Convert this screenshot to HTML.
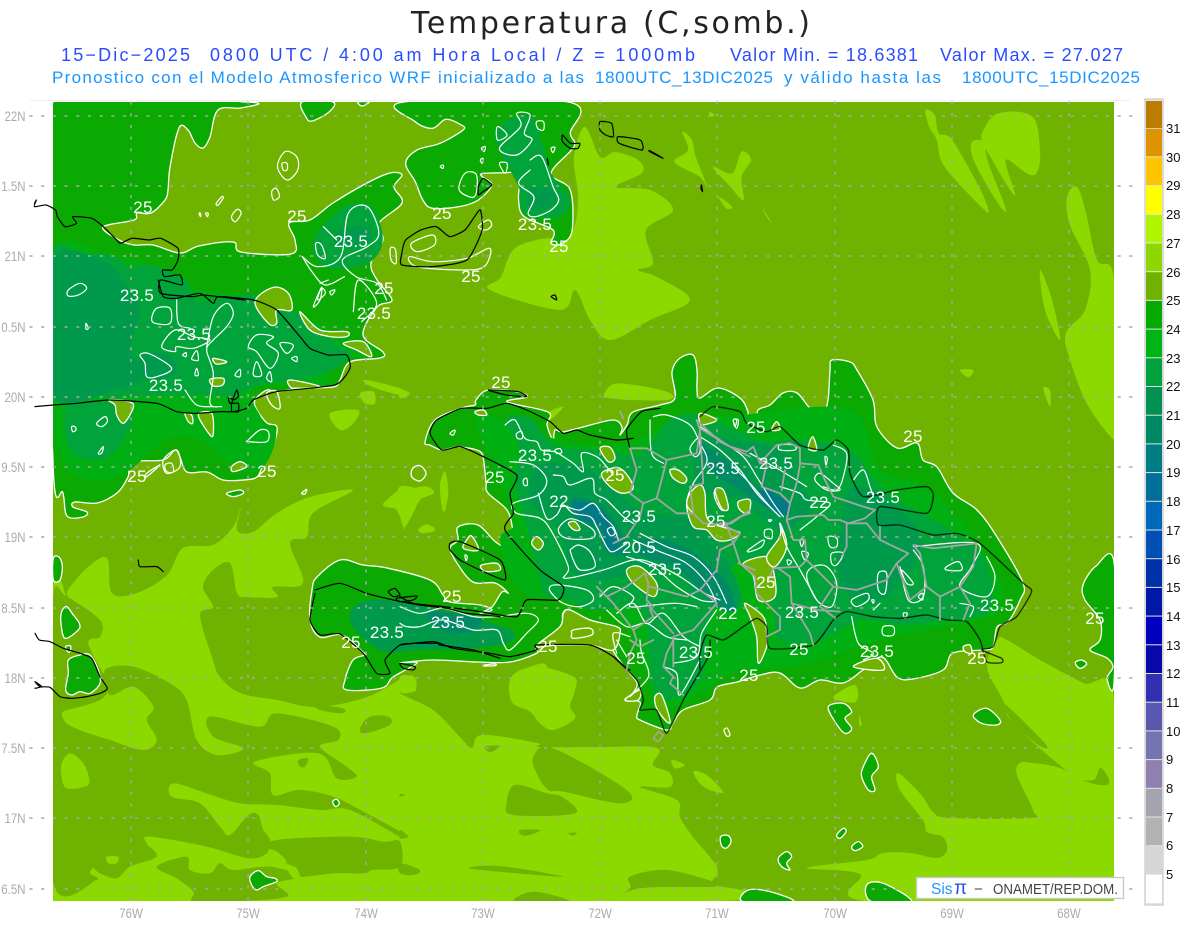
<!DOCTYPE html>
<html><head><meta charset="utf-8"><title>Temperatura</title>
<style>
html,body{margin:0;padding:0;background:#fff}
svg{display:block}
polygon,polyline,path,ellipse{vector-effect:non-scaling-stroke;stroke-linejoin:round;stroke-linecap:round}
.l{fill:#8cd900}.o{fill:#70b200}.g{fill:#0aaa02}.b{fill:#00b012}.c{fill:#00a43a}.d{fill:#009a4c}.e{fill:#008a66}.t{fill:#007a84}
.s{stroke:#fff;stroke-width:1.3}
.w polygon,.w polyline,.w ellipse,.w path{fill:none;stroke:#fff;stroke-width:1.2}
.k polygon,.k polyline,.k path{fill:none;stroke:#000;stroke-width:1.2}
.q polyline{fill:none;stroke:#a5a5a5;stroke-width:1.8}
text{font-family:"Liberation Sans",sans-serif}
.lb text{fill:#fff;font-size:17px;text-anchor:middle;letter-spacing:.3px}
.ax text{fill:#ababab;font-size:13.5px}
.cb text{fill:#111;font-size:13px}
</style></head><body>
<svg width="1200" height="927" viewBox="0 0 1200 927" xmlns="http://www.w3.org/2000/svg">
<defs><clipPath id="m"><rect x="53" y="102" width="1061" height="799"/></clipPath></defs>
<rect width="1200" height="927" fill="#fff"/>
<rect x="30" y="100" width="1100" height="1" fill="#f0f0f0"/>

<text x="411" y="33" font-size="30" textLength="399" fill="#222" style="font-family:'DejaVu Sans',sans-serif">Temperatura (C,somb.)</text>
<g font-size="18" fill="#2a4cff">
<text x="61" y="61" textLength="129">15−Dic−2025</text>
<text x="210" y="61" textLength="485">0800 UTC / 4:00 am Hora Local / Z = 1000mb</text>
<text x="730" y="61" textLength="188">Valor Min. = 18.6381</text>
<text x="940" y="61" textLength="183">Valor Max. = 27.027</text>
</g>
<g font-size="17" fill="#1a96ff">
<text x="52" y="83" textLength="532">Pronostico con el Modelo Atmosferico WRF inicializado a las</text>
<text x="595" y="83" textLength="178">1800UTC_13DIC2025</text>
<text x="784" y="83" textLength="157">y válido hasta las</text>
<text x="962" y="83" textLength="178">1800UTC_15DIC2025</text>
</g>

<g clip-path="url(#m)">
<rect x="53" y="102" width="1061" height="799" class="o"/>
<!-- big lime south -->
<polygon class="l" points="53,901 53,595 67,597 68,590 87,568 107,558 112,593 137,593 167,575 183,548 213,545 233,527 241,507 237,530 253,532 277,513 310,497 353,490 313,513 307,537 290,543 303,583 273,587 277,597 247,597 237,593 230,563 213,570 203,587 213,607 200,615 213,660 220,677 240,693 277,700 317,707 367,697 405,677 415,678 415,690 400,693 433,710 460,737 472,748 482,735 537,743 540,747 600,747 657,748 653,765 670,773 670,787 640,787 677,800 680,817 693,837 717,867 712,882 717,885 717,901"/>
<polygon class="l" points="1114,901 1114,697 1083,683 1040,660 1007,640 997,640 987,667 1003,700 1013,723 1070,773 1093,780 1100,768 1108,777 1107,785 1087,782 1060,768 1033,763 1020,763 1017,775 1033,810 1030,818 950,818 933,812 923,797 910,783 897,773 900,790 923,820 927,832 943,837 947,850 937,858 910,853 883,853 867,860 807,868 860,874 866,901"/>
<!-- olive on lime -->
<g transform="translate(0,480) scale(.3333)"><polygon class="o" points="160,345 200,350 300,420 300,470 265,490 320,600 330,620 300,660 200,690 160,690"/></g>
<g transform="translate(0,640) scale(.3333)" class="o">
<polygon points="160,170 200,250 330,300 430,330 470,300 440,240 460,200 400,140 330,165 315,90 400,80 510,130 560,180 590,300 650,345 730,325 640,290 630,230 780,260 830,220 1000,260 1015,300 960,320 1040,380 1070,410 1010,415 955,340 765,365 810,400 820,465 900,450 1000,470 1100,520 1200,575 1200,590 1050,510 960,510 830,495 720,490 620,460 520,430 515,470 600,490 660,560 690,585 745,525 775,525 790,570 810,600 800,640 745,655 620,620 450,590 440,610 470,650 390,680 350,715 300,700 280,685 270,700 290,720 160,730"/>
<polygon points="830,600 1050,590 1150,605 1200,605 1200,680 1120,690 1090,700 1000,700 900,710 880,680 860,670 810,630"/>
<polygon points="470,680 560,650 570,690 630,700 660,670 700,690 810,680 900,710 830,730 860,770 700,785 580,785 580,755 530,715"/>
<polygon points="950,195 1030,205 1025,220 960,210"/>
<polygon points="1080,265 1110,230 1165,230 1170,255 1095,280"/>
<polygon points="895,360 925,355 915,380 900,380"/>
</g>
<g transform="translate(400,640) scale(.3333)" class="o">
<polygon points="320,490 345,435 440,460 485,470 525,520 340,525"/>
<polygon points="400,350 460,325 680,450 660,490 490,455 445,450 410,400"/>
<polygon points="205,685 300,678 490,710 350,700"/>
<polygon points="0,670 60,690 40,705 0,700"/>
<polygon points="690,710 800,690 940,725 950,740 720,745 630,785 690,745"/>
<polygon points="360,570 420,570 390,585 365,585"/>
<polygon points="345,785 400,755 510,785"/>
<polygon points="255,320 300,318 270,337"/>
<polygon points="0,570 25,590 0,595"/>
<polygon points="120,210 170,235 160,240"/>
<polygon points="505,580 530,578 520,587"/>
<polygon points="0,462 16,465 0,470"/>
</g>
<g transform="translate(800,640) scale(.3333)"><polygon class="o" points="612,190 735,310 720,318 640,250"/></g>
<!-- lime small in south-olive -->
<g transform="translate(0,640) scale(.3333)" class="l">
<polygon points="185,370 210,340 250,370 268,420 255,440 200,445 185,410"/>
<polygon points="320,650 355,650 350,670 325,670"/>
<polygon points="805,630 830,635 860,665 820,660"/>
<polygon points="865,690 885,680 900,710 880,715"/>
</g>
<g transform="translate(400,640) scale(.3333)" class="l">
<polygon points="335,110 410,80 520,110 525,150 510,200 525,235 460,270 420,250 390,215 335,185"/>
<polygon points="815,360 855,375 825,385"/>
<polygon points="880,395 920,405 970,458 910,440"/>
<polygon points="0,110 30,110 48,150 10,160 0,150"/>
</g>
<g transform="translate(800,640) scale(.3333)" class="l">
<polygon points="105,165 165,135 168,185 110,180"/>
<polygon points="178,225 185,255 178,255"/>
</g>
<!-- lime mid/north -->
<g transform="translate(0,280) scale(.3333)" class="l">
<polygon points="990,400 1075,390 1060,430 1020,450"/>
<polygon points="1095,300 1200,325 1200,345 1115,320"/>
<polygon points="1080,340 1120,335 1125,370 1095,370"/>
<polygon points="1200,630 1150,675 1200,680"/>
</g>
<g transform="translate(0,480) scale(.3333)" class="l">
<polygon points="1150,70 1260,20 1300,40 1210,80 1215,150 1190,90"/>
<polygon points="1320,10 1340,5 1335,95"/>
<polygon points="1255,150 1280,133 1305,150 1280,158"/>
</g>
<g transform="translate(400,370) scale(.3333)" class="l">
<polygon points="0,350 90,370 60,390 15,470 0,420"/>
<polygon points="120,350 135,305 145,370 130,425"/>
<polygon points="55,480 75,465 105,475 70,490"/>
<polygon points="0,60 30,70 0,85"/>
<polygon points="620,60 660,40 800,65 800,90 630,85"/>
<polygon points="440,130 490,110 450,150"/>
<polygon points="385,895 430,880 440,900"/>
</g>
<g transform="translate(700,370) scale(.3333)" class="l">
<polygon points="780,0 820,0 805,22"/>
<polygon points="1030,55 1050,60 1050,110"/>
</g>
<polygon class="l" points="585,127 574,157 578,200 570,233 536,240 513,250 501,277 490,290 560,310 575,290 590,320 610,340 650,320 690,300 657,277 638,270 653,263 646,230 673,210 650,190 615,187 642,173 638,160 615,152 600,157"/>
<g transform="translate(600,0) scale(.3827,.3333)" class="l">
<polygon points="215,395 240,420 250,470 280,560 260,530 210,500 195,480 230,450"/>
<polygon points="295,500 345,520 370,455 395,480 370,530 375,600 340,560"/>
<polygon points="310,590 345,620 330,625"/>
<polygon points="425,625 450,670 435,650"/>
<polygon points="285,335 300,345 290,350"/>
<polygon points="850,330 875,345 885,400 920,420 990,560 1015,630 1000,625 900,500 880,420 860,380"/>
<polygon points="970,430 1000,425 1015,490 1060,625 1040,610 980,490"/>
<polygon points="1000,395 1040,340 1130,350 1150,460 1140,520 1115,520 1060,480 1085,585 1055,540 1020,470 1000,430"/>
</g>
<polygon class="l" points="1067,197 1077,187 1086,213 1097,260 1114,280 1114,425 1090,400 1065,340 1085,310 1090,270 1070,225"/>
<polygon class="l" points="1040,270 1052,300 1060,340 1045,310"/>
<polygon class="l" points="1065,340 1085,370 1114,425 1114,440 1085,400"/>

<!-- land: west -->
<polygon class="g s" points="53,102 245,102 241,108 218,110 210,137 203,148 195,143 188,130 179,128 170,167 168,190 165,200 151,213 137,213 134,220 103,227 119,240 134,245 153,245 180,253 199,246 233,242 241,252 291,254 295,240 289,223 310,220 333,203 367,183 390,173 402,175 394,187 402,203 379,223 383,240 371,263 377,280 392,300 377,307 363,335 383,352 380,358 350,362 340,380 333,387 300,388 277,392 267,390 255,400 257,410 267,423 277,427 273,447 263,465 257,477 243,480 223,480 207,472 187,472 180,457 175,450 163,460 132,462 128,477 117,493 97,503 75,502 73,507 87,512 83,517 67,516 63,493 53,460"/>
<polygon class="g s" points="302,102 306,117 312,121 329,112 333,102"/>
<polygon class="g s" points="358,102 362,106 369,102"/>
<g transform="scale(.3827,.3333)">
<polygon class="g s" points="1055,306 1085,365 1130,385 1165,358 1205,375 1210,390 1150,430 1090,450 1060,490 1085,545 1105,600 1130,625 1200,620 1250,600 1285,555 1260,530 1265,520 1350,515 1375,490 1360,545 1355,600 1370,650 1445,690 1440,730 1470,730 1495,690 1490,570 1440,520 1500,440 1490,400 1485,306"/>
</g>
<!-- west shades -->
<polygon class="b" points="53,253 110,255 150,265 200,290 265,300 340,335 375,350 330,365 325,385 265,385 250,395 262,420 265,445 240,470 200,440 165,440 130,470 100,480 70,470 53,420"/>
<polygon class="c" points="53,254 80,255 110,255 130,268 150,265 185,280 200,300 260,295 300,315 330,340 350,355 320,375 260,385 230,395 180,395 100,398 53,395"/>
<polygon class="d" points="53,260 105,262 125,285 140,310 130,350 145,375 110,392 53,392"/>
<polygon class="d" points="140,355 170,355 175,375 145,378"/>
<polygon class="c" points="70,405 130,410 120,445 100,460 70,450"/>
<polygon class="b" points="240,430 275,430 265,465 240,470"/>
<g transform="scale(.3827,.3333)">
<polygon class="c" points="1300,380 1385,345 1420,440 1440,520 1490,600 1460,650 1370,640 1355,560 1300,440"/>
<polygon class="d" points="1385,570 1440,570 1450,610 1390,630"/>
<polygon class="c" points="820,720 900,620 970,620 1000,720 960,790 850,800"/>
<polygon class="d" points="890,690 960,680 960,730 880,740"/>
</g>
<!-- island -->
<polygon class="g s" points="425,442 435,420 462,408 475,405 476,400 488,390 518,392 527,397 507,402 548,412 547,425 553,440 555,430 563,432 583,427 613,420 622,427 620,435 627,425 633,412 660,405 675,398 672,372 680,358 693,355 697,370 697,390 700,398 718,388 740,398 748,412 747,420 757,422 758,410 770,405 783,393 797,393 810,408 823,413 828,400 830,370 832,360 850,362 857,370 873,400 877,427 897,448 917,443 923,460 937,467 953,493 977,510 997,537 1023,583 1020,600 1008,622 997,627 993,647 983,650 953,653 943,670 913,679 897,677 882,657 863,670 843,683 820,680 800,688 780,673 760,675 737,682 717,687 710,700 683,710 673,723 667,730 640,720 637,715 640,702 625,700 633,693 637,683 627,670 613,650 617,640 620,633 617,627 590,620 570,610 563,613 560,627 537,647 537,653 510,662 477,662 433,660 400,663 417,663 393,677 382,688 347,690 345,680 353,660 365,655 363,652 342,635 320,637 310,620 312,590 317,577 340,560 363,565 387,568 430,580 443,595 450,602 480,605 492,610 480,613 492,607 502,592 508,593 495,583 473,582 457,563 450,548 458,540 458,527 478,525 497,543 518,552 513,530 507,510 488,493 486,482 483,457 477,450 457,447 442,450 430,445"/>
<!-- shades island -->
<polygon class="b" points="480,415 560,440 620,445 680,420 740,415 850,410 880,470 930,490 990,560 1000,610 950,625 880,640 800,665 740,670 705,690 660,710 645,670 620,620 560,600 520,590 500,540 515,520 490,460"/>
<polygon class="c" points="505,420 530,418 555,445 600,450 635,455 650,445 670,420 700,415 760,440 800,440 850,450 875,480 900,500 950,530 985,560 990,610 950,620 900,625 860,620 820,640 780,640 770,600 740,560 710,620 700,680 660,700 650,660 640,610 590,610 570,600 545,595 540,580 525,520 515,480 520,450"/>
<polygon class="d" points="540,465 590,470 640,510 700,520 720,550 740,590 735,610 700,600 670,570 600,580 570,570 560,530 530,500"/>
<polygon class="d" points="700,440 780,450 800,480 810,510 780,530 740,500 700,490"/>
<polygon class="d" points="850,490 900,510 920,550 880,600 840,580"/>
<polygon class="d" points="350,620 370,600 440,610 510,630 500,645 420,650 380,650"/>
<polygon class="e" points="573,498 600,505 620,530 628,555 607,552 597,530 575,520"/>
<polygon class="e" points="640,540 680,545 725,580 735,610 715,605 680,570 640,555"/>
<polygon class="e" points="700,443 733,465 760,490 785,500 790,515 770,510 740,490 710,470"/>
<polygon class="e" points="430,612 480,618 470,632 440,630"/>
<polygon class="t" points="573,502 597,507 613,527 617,550 607,547 600,527 580,517"/>
<polygon class="t" points="763,487 780,497 790,503 787,513 780,515 763,502"/>
<!-- south-east & other blobs -->
<polygon class="g s" points="1114,562 1096,566 1083,585 1085,600 1100,620 1100,640 1090,650 1107,658 1113,667 1107,678 1114,683"/>
<g transform="translate(0,640) scale(.3333)">
<polygon class="g s" points="205,60 240,45 270,45 295,90 300,130 270,160 240,155 215,165 197,150 205,100"/>
<polygon class="g s" points="197,20 212,18 210,35 203,35"/>
<polygon class="g s" points="750,710 775,692 800,710 825,715 830,725 790,740 770,750 755,735"/>
<polygon class="g s" points="998,485 1010,478 1018,490 1007,500"/>
</g>
<g transform="translate(0,480) scale(.3333)">
<polygon class="g s" points="185,395 200,380 220,405 238,430 235,450 195,475 183,430"/>
<polygon class="g s" points="160,235 178,232 187,260 180,300 160,300"/>
</g>
<g transform="translate(800,640) scale(.3333)">
<polygon class="g s" points="85,200 130,190 155,215 135,235 155,265 135,280 105,245"/>
<polygon class="g s" points="190,380 215,340 235,380 215,410 225,450 205,450 185,410"/>
<polygon class="g s" points="520,225 560,205 600,240 590,255 545,250"/>
<polygon class="g s" points="110,585 130,565 138,575 120,595"/>
<polygon class="g s" points="155,620 175,605 188,620 165,632"/>
<polygon class="g s" points="200,735 250,730 335,785 215,785"/>
<polygon class="g s" points="826,68 845,60 860,72 840,85"/>
</g>
<g transform="translate(400,640) scale(.3333)">
<polygon class="g s" points="1135,655 1160,635 1175,650 1160,670 1170,690 1145,680"/>
<polygon class="g s" points="1030,785 1045,750 1110,755 1180,785"/>
<polygon class="g s" points="962,590 985,587 993,605 980,624 965,618"/>
</g>
<!-- olive holes with white outline -->
<g transform="translate(0,280) scale(.3333)">
<polygon class="o s" points="325,360 360,360 398,370 395,395 370,430 350,405 345,375"/>
<polygon class="o s" points="555,400 575,405 578,430 565,425"/>
<polygon class="o s" points="595,405 635,400 640,460 630,465"/>
<polygon class="o s" points="765,65 820,22 865,40 875,90 830,90 830,130 805,130"/>
<polygon class="o s" points="900,95 960,150 1040,155 1040,170 990,170 930,150"/>
<polygon class="o s" points="1030,190 1090,185 1115,230 1070,210"/>
<polygon class="o s" points="870,300 960,320 890,325 870,320"/>
<polygon class="o s" points="630,298 670,295 668,315 640,318"/>
<polygon class="o s" points="640,235 680,245 660,252 645,250"/>
<polygon class="o s" points="800,340 830,335 840,385 815,375"/>
<polygon class="o s" points="700,575 740,560 720,545 695,560"/>
<polygon class="o s" points="440,590 480,555 440,580"/>
<polygon class="g s" points="680,640 720,630 730,640 700,650"/>
<polygon class="o s" points="905,640 920,628 915,642"/>
</g>
<g transform="translate(400,370) scale(.3333)">
<polygon class="o s" points="480,770 490,730 510,720 570,750 650,770 660,790 640,840 570,825 470,825 410,828"/>
<polygon class="o s" points="225,125 250,120 260,135 235,135"/>
<polygon class="o s" points="600,235 630,232 645,265 625,275"/>
<polygon class="o s" points="810,300 835,300 860,325 850,340 820,325"/>
<polygon class="o s" points="945,360 965,360 985,410 965,420 945,385"/>
<polygon class="o s" points="680,600 720,590 770,640 760,680 700,640"/>
<polygon class="o s" points="870,370 900,345 915,370 925,450 1000,480 1020,490 990,510 950,510 920,480 880,470 860,410"/>
<polygon class="o s" points="505,460 525,455 540,478 522,480"/>
<polygon class="o s" points="200,510 215,498 235,540 190,535"/>
<polygon class="o s" points="245,585 290,580 300,600 260,605 245,597"/>
<polygon class="o s" points="520,780 570,775 575,795 520,805 515,790"/>
<polygon class="o s" points="395,520 410,500 430,520 415,540"/>
<polygon class="o s" points="38,295 60,287 78,310 60,333 35,320"/>
<polygon class="o s" points="605,310 660,295 700,350 670,370 630,350"/>
</g>
<g transform="translate(700,370) scale(.3333)">
<polygon class="o s" points="130,580 200,560 220,600 225,680 175,690 160,620"/>
<polygon class="o s" points="135,700 190,740 200,790 200,830 175,880 170,800 150,740"/>
<polygon class="o s" points="0,130 50,150 10,165 0,160"/>
<polygon class="o s" points="325,235 338,200 350,240"/>
<polygon class="o s" points="215,180 230,155 240,178"/>
<polygon class="o s" points="240,460 260,530 225,590 200,560 240,500"/>
<polygon class="o s" points="460,890 530,865 550,900"/>
<polygon class="o s" points="45,360 70,360 85,415 65,415"/>
<polygon class="o s" points="115,395 150,390 145,430 120,420"/>
<polygon class="o s" points="790,830 810,825 815,850 795,845"/>
</g>
<g transform="translate(400,640) scale(.3333)">
<polygon class="o s" points="765,170 785,165 810,240 800,245 770,205"/>
<polygon class="o s" points="675,180 720,150 715,180"/>
</g>
<!-- white contours -->
<g class="w">
<g transform="scale(.3827,.3333)">
<polygon points="725,500 745,455 775,470 778,510 750,540"/>
<polygon points="737,490 750,490 750,510 740,510"/>
<polygon points="710,575 722,565 730,590 715,600"/>
<polygon points="565,610 580,590 583,595 570,615"/>
<polygon points="605,650 620,628 630,640 615,665"/>
<polygon points="520,640 524,640 524,650"/>
<polygon points="537,640 544,640 542,650"/>
<polygon points="1250,680 1275,660 1285,675 1270,690"/>
<polygon points="1300,380 1325,405 1300,420"/>
<polygon points="1350,340 1385,345 1370,400 1390,420 1350,465 1305,445 1360,380"/>
<polygon points="1402,365 1420,365 1420,390 1405,385"/>
<polygon points="1440,445 1450,442 1445,458"/>
<polyline points="1385,480 1415,470 1445,560 1460,600 1440,630 1400,650 1380,640 1395,590 1355,550 1385,510"/>
<polygon points="1215,520 1245,525 1240,590 1200,570"/>
<polygon points="1305,490 1325,490 1320,520"/>
<polygon points="1020,745 1033,748 1035,790 1022,780"/>
<polygon points="1075,730 1130,705 1135,735 1090,755"/>
<polygon points="1070,770 1130,785 1220,775 1280,745 1265,800 1205,810 1090,800"/>
<polyline points="790,770 830,800 890,770 910,640 960,620 990,700 960,740 895,780 930,830 985,850 1010,900"/>
<polygon points="825,730 840,735 850,775 830,765"/>
<polyline points="845,680 880,720"/>
<polyline points="790,770 815,815 850,855 900,830"/>
<polygon points="830,900 840,865 850,880"/>
<polygon points="1258,445 1268,440 1265,455"/>
<polygon points="1255,480 1262,475 1260,490"/>
<polygon points="1150,500 1158,495 1158,505"/>
</g>
<g transform="translate(0,280) scale(.3333)">
<polygon points="205,30 240,10 260,25 235,45 205,48"/>
<polygon points="455,115 470,85 510,85 510,130 465,130"/>
<polygon points="215,440 225,440 228,450 218,455"/>
<polygon points="290,430 315,410 322,425 305,440"/>
<polygon points="295,520 310,500 305,520"/>
<polygon points="420,225 450,222 515,265 470,290 440,290 435,250"/>
<polygon points="485,200 525,150 580,170 630,180 580,205 530,200 525,215"/>
<polyline points="620,200 640,110 680,70 700,100 680,140 640,180 620,210 640,280 630,370 665,380"/>
<polygon points="745,200 770,165 820,170 800,190 835,220 810,265 770,215"/>
<polygon points="760,285 770,245 785,285"/>
<polygon points="705,285 720,268 720,290"/>
<polygon points="800,295 810,275 815,305"/>
<polygon points="745,480 780,450 805,455 800,485 745,485"/>
<polygon points="575,235 590,212 595,240 580,240"/>
<polygon points="585,285 590,265 595,285"/>
<polygon points="548,225 558,218 558,230"/>
<polygon points="258,130 265,145 258,147"/>
<polyline points="555,330 590,375 640,380"/>
<polyline points="530,60 535,130 570,145"/>
<polygon points="490,540 530,510 540,560 500,580"/>
<polygon points="495,555 515,550 520,575 500,575"/>
<polygon points="840,190 870,190 880,200 860,220"/>
<polygon points="875,235 890,230 890,245"/>
<polygon points="940,80 965,22 960,60"/>
<polygon points="990,35 1005,30 995,45"/>
<polyline points="1060,95 1075,0 1130,70 1085,125"/>
<polyline points="960,10 985,0"/>
</g>
<g transform="translate(400,370) scale(.3333)">
<polyline points="315,165 345,150 375,205 410,215 425,240 465,245 490,260 520,280 550,305 545,250 590,260 620,290 640,315"/>
<polyline points="330,275 400,285 440,330 415,375 340,400 350,430 420,445 455,485 505,590 495,625 610,600 700,570 760,580 840,620 905,665 960,690"/>
<polyline points="460,315 490,320 510,345 575,325 585,370 620,390 670,440 700,460"/>
<polyline points="415,370 440,445 470,435 490,405 520,430 570,440 590,470 620,530 640,545 680,520"/>
<polyline points="500,410 540,420 580,400 610,440 640,470 655,510"/>
<polygon points="622,480 635,472 645,490 632,497"/>
<polygon points="475,480 500,450 530,450 580,480 575,505 500,505"/>
<polyline points="510,540 535,525 570,545 585,590 540,600 520,570 510,540"/>
<polyline points="720,490 800,530 880,560 940,620 980,700"/>
<polyline points="700,510 780,545 860,580 920,640 950,700"/>
<polyline points="680,560 760,590 830,650 900,690 940,695"/>
<polyline points="600,680 640,650 700,680 690,710 760,705 830,700 890,710"/>
<polyline points="620,720 680,770 740,760 800,800 860,810"/>
<polyline points="760,140 800,135 870,165 900,220 920,260 915,290 880,340 860,400 880,430"/>
<polyline points="750,150 755,250 790,280"/>
<polyline points="0,710 60,730 130,715 220,740 290,740 380,730 415,750 380,790 330,840 310,820 290,780 220,780 130,750 60,770 20,770 0,760"/>
<polygon points="450,650 480,645 560,660 580,690 540,710 490,700 455,670"/>
<polygon points="870,235 895,205 900,245 885,260"/>
<polygon points="1000,150 1015,150 1010,175"/>
<polygon points="350,190 365,185 367,205 352,205"/>
<polygon points="370,330 380,325 382,345 372,345"/>
<polygon points="195,555 202,560 198,572"/>
<polygon points="150,190 165,180 160,195"/>
<polygon points="465,240 480,236 485,248 470,250"/>
<polyline points="650,730 700,700 740,760 790,730 850,800 900,830"/>
<polyline points="820,880 890,860 905,790 950,720"/>
<polygon points="255,885 285,882 285,887 250,888"/>
<polyline points="690,800 640,790 650,850"/>
</g>
<g transform="translate(700,370) scale(.3333)">
<polyline points="0,170 60,210 130,260 170,320 220,400 250,440"/>
<polyline points="0,200 60,240 120,300 170,370 230,430"/>
<polyline points="100,290 150,340 210,410 240,440"/>
<polyline points="240,350 300,370 320,390 390,400 350,440 300,480"/>
<polyline points="150,250 240,300 320,350"/>
<polygon points="240,225 280,225 285,240 240,240"/>
<polygon points="345,330 360,310 400,340 420,360 380,360"/>
<polygon points="385,500 410,505 410,530 390,530"/>
<polygon points="395,550 430,550 410,585 395,580"/>
<polygon points="145,540 190,510 185,530 150,545"/>
<polygon points="740,590 775,575 785,600 740,600"/>
<polygon points="535,610 560,610 555,670 535,660"/>
<polygon points="605,600 640,640 620,640"/>
<polygon points="455,690 500,670 505,690 470,710"/>
<polygon points="550,770 580,770 580,795 550,795"/>
<polyline points="640,530 830,520 815,590 780,650 860,680 885,620 860,560"/>
<polyline points="640,540 670,590 670,680 625,690 600,590"/>
<polyline points="455,740 475,820 520,850 490,870"/>
<polygon points="340,590 380,590 410,640 395,710 350,690 320,620"/>
<polyline points="240,460 260,530 300,600 350,690"/>
<polyline points="400,225 440,250 430,320 410,360 370,350"/>
<polyline points="460,330 490,300 510,350 520,380"/>
<polygon points="100,150 110,150 105,170"/>
<polygon points="375,260 382,265 378,285"/>
<polygon points="195,480 215,480 215,505 195,500"/>
<polygon points="300,510 312,510 305,530"/>
<polygon points="305,545 325,550 315,570"/>
<polygon points="262,570 275,575 265,585"/>
<polygon points="655,680 668,670 668,690"/>
<polygon points="515,690 522,690 520,700"/>
<polyline points="780,700 820,710 810,740"/>
<polyline points="540,700 520,720"/>
<polygon points="610,730 622,730 615,745"/>
<polygon points="205,450 215,450 210,455"/>
</g>
<g transform="translate(400,640) scale(.3333)">
<polyline points="720,0 725,40 745,90 740,120 690,170"/>
<polyline points="790,80 830,100 840,165 900,60"/>
<polygon points="972,270 982,265 990,285 980,288"/>
<polyline points="650,0 680,50"/>
</g>
</g>
</g>

<!-- coasts -->
<g class="k">
<polyline transform="scale(.3827,.3333)" points="90,610 95,600 90,620 120,615 145,630 150,650 170,680 200,670 190,650 240,655 270,680 305,720 315,730 345,715 390,720 420,715 465,745 465,780 450,810 425,810 430,830 470,825 475,855 420,840 420,880 500,890 530,885 570,890 640,900"/>
<g transform="scale(.3827,.3333)">
<polygon points="1050,760 1060,720 1100,690 1140,680 1175,710 1215,690 1240,650 1255,630 1260,690 1220,780 1130,800 1050,795"/>
<polygon points="1262,535 1285,555 1262,575 1250,585 1250,560"/>
<polygon points="1470,405 1490,430 1515,430 1510,445 1490,445 1470,425"/>
<polyline points="1430,475 1433,495"/>
<polygon points="1440,890 1450,885 1455,900"/>
</g>
<g transform="translate(600,0) scale(.3827,.3333)">
<polygon points="0,365 30,370 35,410 15,405 0,390"/>
<polygon points="48,410 105,420 110,450 50,430"/>
<polygon points="130,452 165,475 130,455"/>
<polygon points="265,555 268,575 264,565"/>
</g>
<polyline transform="translate(0,280) scale(.3333)" points="475,0 490,50 530,55 600,40 640,70 655,50 760,60 830,90 900,170 930,205 985,225 1040,225 1050,265 1005,315 830,335 760,360 740,385 700,395 660,395 590,400 530,395 470,370 330,360 230,370 160,375 105,380"/>
<polyline transform="translate(0,280) scale(.3333)" points="695,395 695,370 710,330 715,350 700,360 685,350 690,370 715,370 715,395 700,395"/>
<polyline transform="translate(0,280) scale(.3333)" points="415,840 420,860 470,860 490,875"/>
<g transform="translate(0,480) scale(.3333)">
<polyline points="105,460 118,480 150,485 190,505 240,520 275,535 300,590 322,625 300,640 260,650 215,655 180,650 150,622 120,620 105,605 125,620 105,625"/>
<polyline points="945,330 1020,310 1100,340 1180,360 1260,375 1340,385 1400,400 1500,410"/>
<polyline points="945,340 930,420 960,465 1020,462 1090,520 1130,580 1170,580 1155,540 1200,495 1250,490 1320,490 1320,495 1420,510 1500,535"/>
<polygon points="1165,335 1185,325 1200,345 1180,350"/>
<polygon points="1190,355 1250,348 1240,360 1200,365"/>
<polygon points="1200,550 1245,560 1240,570 1210,565"/>
</g>
<g transform="translate(400,370) scale(.3333)">
<polyline points="700,205 650,210 570,195 530,180 490,190 450,155 380,120 320,100 262,115 185,115 110,150 90,190 125,240 180,230 250,260 350,315 330,370 340,430 315,480 420,600 490,650 475,690 380,690 350,740 240,725 130,710 40,700 0,680"/>
<polyline points="0,825 100,815 160,835 270,850 330,860 410,840 410,825 570,825 640,860 680,895 690,900"/>
<polygon points="150,520 180,515 300,570 315,630 240,600 180,570 150,540"/>
<polygon points="265,60 355,65 380,80 320,75"/>
<polyline points="690,235 680,180 725,125 780,115"/>
</g>
</g>
<g class="k" style="opacity:.85">
<g transform="translate(700,370) scale(.3333)">
<polyline points="0,140 40,110 120,125 140,160 200,185 240,170 300,225 370,240 410,210 445,240 450,310 490,380 590,360 680,350 700,375 680,430 540,410 535,465 600,465 700,495 770,490 840,520 970,640 995,665 950,740 900,770 880,830 845,840 905,865 905,878 860,875 840,810 800,755 740,750 680,735 600,745 520,740 440,725 400,750 340,825 210,835 200,770 170,745 130,770 70,810 20,795 0,850 0,900"/>
</g>
<polyline transform="translate(400,640) scale(.3333)" points="930,0 925,50 850,180 800,280 770,210 720,210 730,180 710,120 640,50"/>
</g>
<!-- province borders -->
<g class="q">
<g transform="translate(400,370) scale(.3333)">
<polyline points="690,235 710,300 690,370 730,400 720,440 680,500 640,520"/>
<polyline points="590,650 620,680 680,650 735,610 745,640 740,690 760,710"/>
<polyline points="595,655 640,700 700,780 710,810 690,850 680,900"/>
<polyline points="690,235 740,235 800,270 790,310 770,385 730,400"/>
<polyline points="770,385 830,430 880,430 910,460 980,465 1020,440 1050,430"/>
<polyline points="880,430 870,350 910,340 900,180 890,150 960,215 1050,260"/>
<polyline points="800,270 890,250 900,180"/>
<polyline points="980,465 1000,520 960,540 950,600 900,660 940,690 950,700 880,780 820,800 820,890"/>
<polyline points="900,660 860,680 750,650"/>
<polyline points="740,700 820,790"/>
<polyline points="750,720 760,740 700,780"/>
<polyline points="660,125 670,145"/>
</g>
<g transform="translate(700,370) scale(.3333)">
<polyline points="0,175 90,230 140,245 160,230 180,280 230,225 270,220 300,235 300,280 355,285 370,320 400,380 490,410 525,420 495,445 445,460 420,450 385,450 370,435 290,440 260,450 270,400 240,370 185,350 200,280 180,280"/>
<polyline points="255,300 245,360"/><polyline points="300,285 290,340 270,400"/>
<polyline points="150,420 95,460 60,460 120,490 100,520 120,580 165,620 170,670 240,740 240,780 200,800"/>
<polyline points="115,580 165,600"/>
<polyline points="260,450 280,510 315,510 320,570 300,590 220,595 205,630"/>
<polyline points="320,570 400,650 470,660 500,650 560,630 590,580 625,550 540,510 500,460 445,460"/>
<polyline points="590,580 630,690 680,650 670,600 660,550 640,525 700,535 830,520 820,590 780,650 720,680 680,650"/>
<polyline points="720,680 720,750"/><polyline points="780,650 810,700 790,750"/>
<polyline points="400,650 360,710 400,740"/>
<polyline points="440,460 440,530 425,560"/><polyline points="540,510 540,470"/>
<polyline points="235,595 270,620 275,700 300,740 330,790 340,825"/>
<polyline points="275,700 350,720 420,725"/>
</g>
<polygon transform="translate(400,640) scale(.3333)" points="760,295 775,275 790,285 775,305" style="fill:none;stroke:#a5a5a5;stroke-width:1.5"/>
<polyline transform="translate(400,640) scale(.3333)" points="690,0 720,20 760,0"/>
<polyline transform="translate(400,640) scale(.3333)" points="820,0 800,40 790,80 820,110 810,130 850,165"/>
</g>

<!-- grid -->
<g stroke="#a8a8a8" stroke-width="1.5" stroke-dasharray="2 9.7" fill="none">
<path d="M30 116H1135M30 186H1135M30 256H1135M30 327H1135M30 397H1135M30 467H1135M30 537H1135M30 608H1135M30 678H1135M30 748H1135M30 818H1135M30 889H1135"/>
<path d="M131 102V905M248 102V905M366 102V905M483 102V905M600 102V905M717 102V905M835 102V905M952 102V905M1069 102V905"/>
</g>
<!-- contour labels -->
<g class="lb">
<text x="143" y="213">25</text><text x="297" y="222">25</text><text x="442" y="219">25</text><text x="535" y="230">23.5</text><text x="559" y="252">25</text><text x="351" y="247">23.5</text><text x="471" y="282">25</text><text x="384" y="294">25</text><text x="137" y="301">23.5</text><text x="374" y="319">23.5</text><text x="194" y="340">23.5</text><text x="166" y="391">23.5</text><text x="501" y="388">25</text><text x="267" y="477">25</text><text x="137" y="482">25</text><text x="913" y="442">25</text><text x="756" y="433">25</text><text x="535" y="461">23.5</text><text x="723" y="474">23.5</text><text x="776" y="469">23.5</text><text x="495" y="483">25</text><text x="615" y="481">25</text><text x="559" y="507">22</text><text x="819" y="508">22</text><text x="883" y="503">23.5</text><text x="639" y="522">23.5</text><text x="716" y="527">25</text><text x="639" y="553">20.5</text><text x="665" y="575">23.5</text><text x="766" y="588">25</text><text x="452" y="602">25</text><text x="997" y="611">23.5</text><text x="802" y="618">23.5</text><text x="728" y="619">22</text><text x="387" y="638">23.5</text><text x="448" y="628">23.5</text><text x="351" y="648">25</text><text x="548" y="652">25</text><text x="1095" y="624">25</text><text x="799" y="655">25</text><text x="877" y="657">23.5</text><text x="696" y="658">23.5</text><text x="636" y="664">25</text><text x="977" y="664">25</text><text x="749" y="681">25</text>
</g>
<!-- axes -->
<g class="ax" text-anchor="end" transform="scale(.85,1)">
<text x="30" y="121">22N</text><text x="30" y="191">1.5N</text><text x="30" y="261">21N</text><text x="30" y="332">0.5N</text><text x="30" y="402">20N</text><text x="30" y="472">9.5N</text><text x="30" y="542">19N</text><text x="30" y="613">8.5N</text><text x="30" y="683">18N</text><text x="30" y="753">7.5N</text><text x="30" y="823">17N</text><text x="30" y="894">6.5N</text>
</g>
<g class="ax" text-anchor="middle" transform="scale(.85,1)">
<text x="154.1" y="918">76W</text><text x="291.8" y="918">75W</text><text x="430.6" y="918">74W</text><text x="568.2" y="918">73W</text><text x="705.9" y="918">72W</text><text x="843.5" y="918">71W</text><text x="982.4" y="918">70W</text><text x="1120" y="918">69W</text><text x="1257.6" y="918">68W</text>
</g>
<!-- watermark -->
<rect x="916.5" y="877.5" width="207" height="21" fill="#fff" stroke="#c8c8c8" stroke-width="1.4"/>
<text x="931" y="894" font-size="15.5" fill="#1e96ff">Sis</text>
<text x="954" y="894" font-size="19" fill="#2a4cff" font-family="'DejaVu Sans',sans-serif">π</text>
<text x="974" y="894" font-size="15" fill="#444">−</text>
<text x="993" y="894" font-size="14.5" fill="#444" textLength="125" lengthAdjust="spacingAndGlyphs">ONAMET/REP.DOM.</text>

<!-- colorbar -->
<rect x="1145" y="99" width="18" height="806" fill="#e4e4e4" stroke="#cfcfcf" stroke-width="1.4"/>
<rect x="1146" y="101" width="16" height="27" fill="#bc7c00"/>
<rect x="1146" y="128.7" width="16" height="27.7" fill="#de9400"/>
<rect x="1146" y="157.4" width="16" height="27.7" fill="#ffc400"/>
<rect x="1146" y="186.1" width="16" height="27.7" fill="#ffff00"/>
<rect x="1146" y="214.8" width="16" height="27.7" fill="#b0f600"/>
<rect x="1146" y="243.5" width="16" height="27.7" fill="#8cd800"/>
<rect x="1146" y="272.2" width="16" height="27.7" fill="#70b200"/>
<rect x="1146" y="300.9" width="16" height="27.7" fill="#04aa00"/>
<rect x="1146" y="329.6" width="16" height="27.7" fill="#00b416"/>
<rect x="1146" y="358.3" width="16" height="27.7" fill="#00a23c"/>
<rect x="1146" y="387" width="16" height="27.7" fill="#009250"/>
<rect x="1146" y="415.7" width="16" height="27.7" fill="#008866"/>
<rect x="1146" y="444.4" width="16" height="27.7" fill="#007d82"/>
<rect x="1146" y="473.1" width="16" height="27.7" fill="#006f9a"/>
<rect x="1146" y="501.8" width="16" height="27.7" fill="#0068b8"/>
<rect x="1146" y="530.5" width="16" height="27.7" fill="#0050b4"/>
<rect x="1146" y="559.2" width="16" height="27.7" fill="#0030a8"/>
<rect x="1146" y="587.9" width="16" height="27.7" fill="#0018a8"/>
<rect x="1146" y="616.6" width="16" height="27.7" fill="#0000c0"/>
<rect x="1146" y="645.3" width="16" height="27.7" fill="#0808a8"/>
<rect x="1146" y="674" width="16" height="27.7" fill="#3030b0"/>
<rect x="1146" y="702.7" width="16" height="27.7" fill="#5858b0"/>
<rect x="1146" y="731.4" width="16" height="27.7" fill="#7474b0"/>
<rect x="1146" y="760.1" width="16" height="27.7" fill="#9080b0"/>
<rect x="1146" y="788.8" width="16" height="27.7" fill="#a4a4b0"/>
<rect x="1146" y="817.5" width="16" height="27.7" fill="#b2b2b2"/>
<rect x="1146" y="846.2" width="16" height="27.7" fill="#d6d6d6"/>
<rect x="1146" y="874.9" width="16" height="28" fill="#fff"/>
<g class="cb">
<text x="1166" y="133">31</text><text x="1166" y="162">30</text><text x="1166" y="190">29</text><text x="1166" y="219">28</text><text x="1166" y="248">27</text><text x="1166" y="277">26</text><text x="1166" y="305">25</text><text x="1166" y="334">24</text><text x="1166" y="363">23</text><text x="1166" y="391">22</text><text x="1166" y="420">21</text><text x="1166" y="449">20</text><text x="1166" y="477">19</text><text x="1166" y="506">18</text><text x="1166" y="535">17</text><text x="1166" y="564">16</text><text x="1166" y="592">15</text><text x="1166" y="621">14</text><text x="1166" y="650">13</text><text x="1166" y="678">12</text><text x="1166" y="707">11</text><text x="1166" y="736">10</text><text x="1166" y="764">9</text><text x="1166" y="793">8</text><text x="1166" y="822">7</text><text x="1166" y="850">6</text><text x="1166" y="879">5</text>
</g>
</svg>
<script>
/* Smooth the hand-traced map shapes into organic curves (Catmull-Rom). */
(function(){
var NS='http://www.w3.org/2000/svg';
function conv(el){
  if(el.closest('.q'))return;
  var closed=el.tagName==='polygon';
  var n=(el.getAttribute('points')||'').trim().split(/[\s,]+/).map(Number);
  var p=[];for(var i=0;i+1<n.length;i+=2)p.push([n[i],n[i+1]]);
  var c=p.length;if(c<3)return;
  var f=el.closest('.k')?10:6;
  function at(i){return closed?p[(i+c)%c]:p[Math.max(0,Math.min(c-1,i))];}
  var d='M'+p[0][0]+' '+p[0][1],last=closed?c:c-1;
  for(var j=0;j<last;j++){
    var a=at(j-1),b=at(j),e=at(j+1),g=at(j+2);
    d+='C'+(b[0]+(e[0]-a[0])/f).toFixed(1)+' '+(b[1]+(e[1]-a[1])/f).toFixed(1)+' '+(e[0]-(g[0]-b[0])/f).toFixed(1)+' '+(e[1]-(g[1]-b[1])/f).toFixed(1)+' '+e[0]+' '+e[1];
  }
  if(closed)d+='Z';
  var q=document.createElementNS(NS,'path');
  for(var k=0;k<el.attributes.length;k++){var at2=el.attributes[k];if(at2.name!=='points')q.setAttribute(at2.name,at2.value);}
  q.setAttribute('d',d);
  el.parentNode.replaceChild(q,el);
}
Array.prototype.slice.call(document.querySelectorAll('polygon,polyline')).forEach(conv);
})();
</script>
</body></html>
